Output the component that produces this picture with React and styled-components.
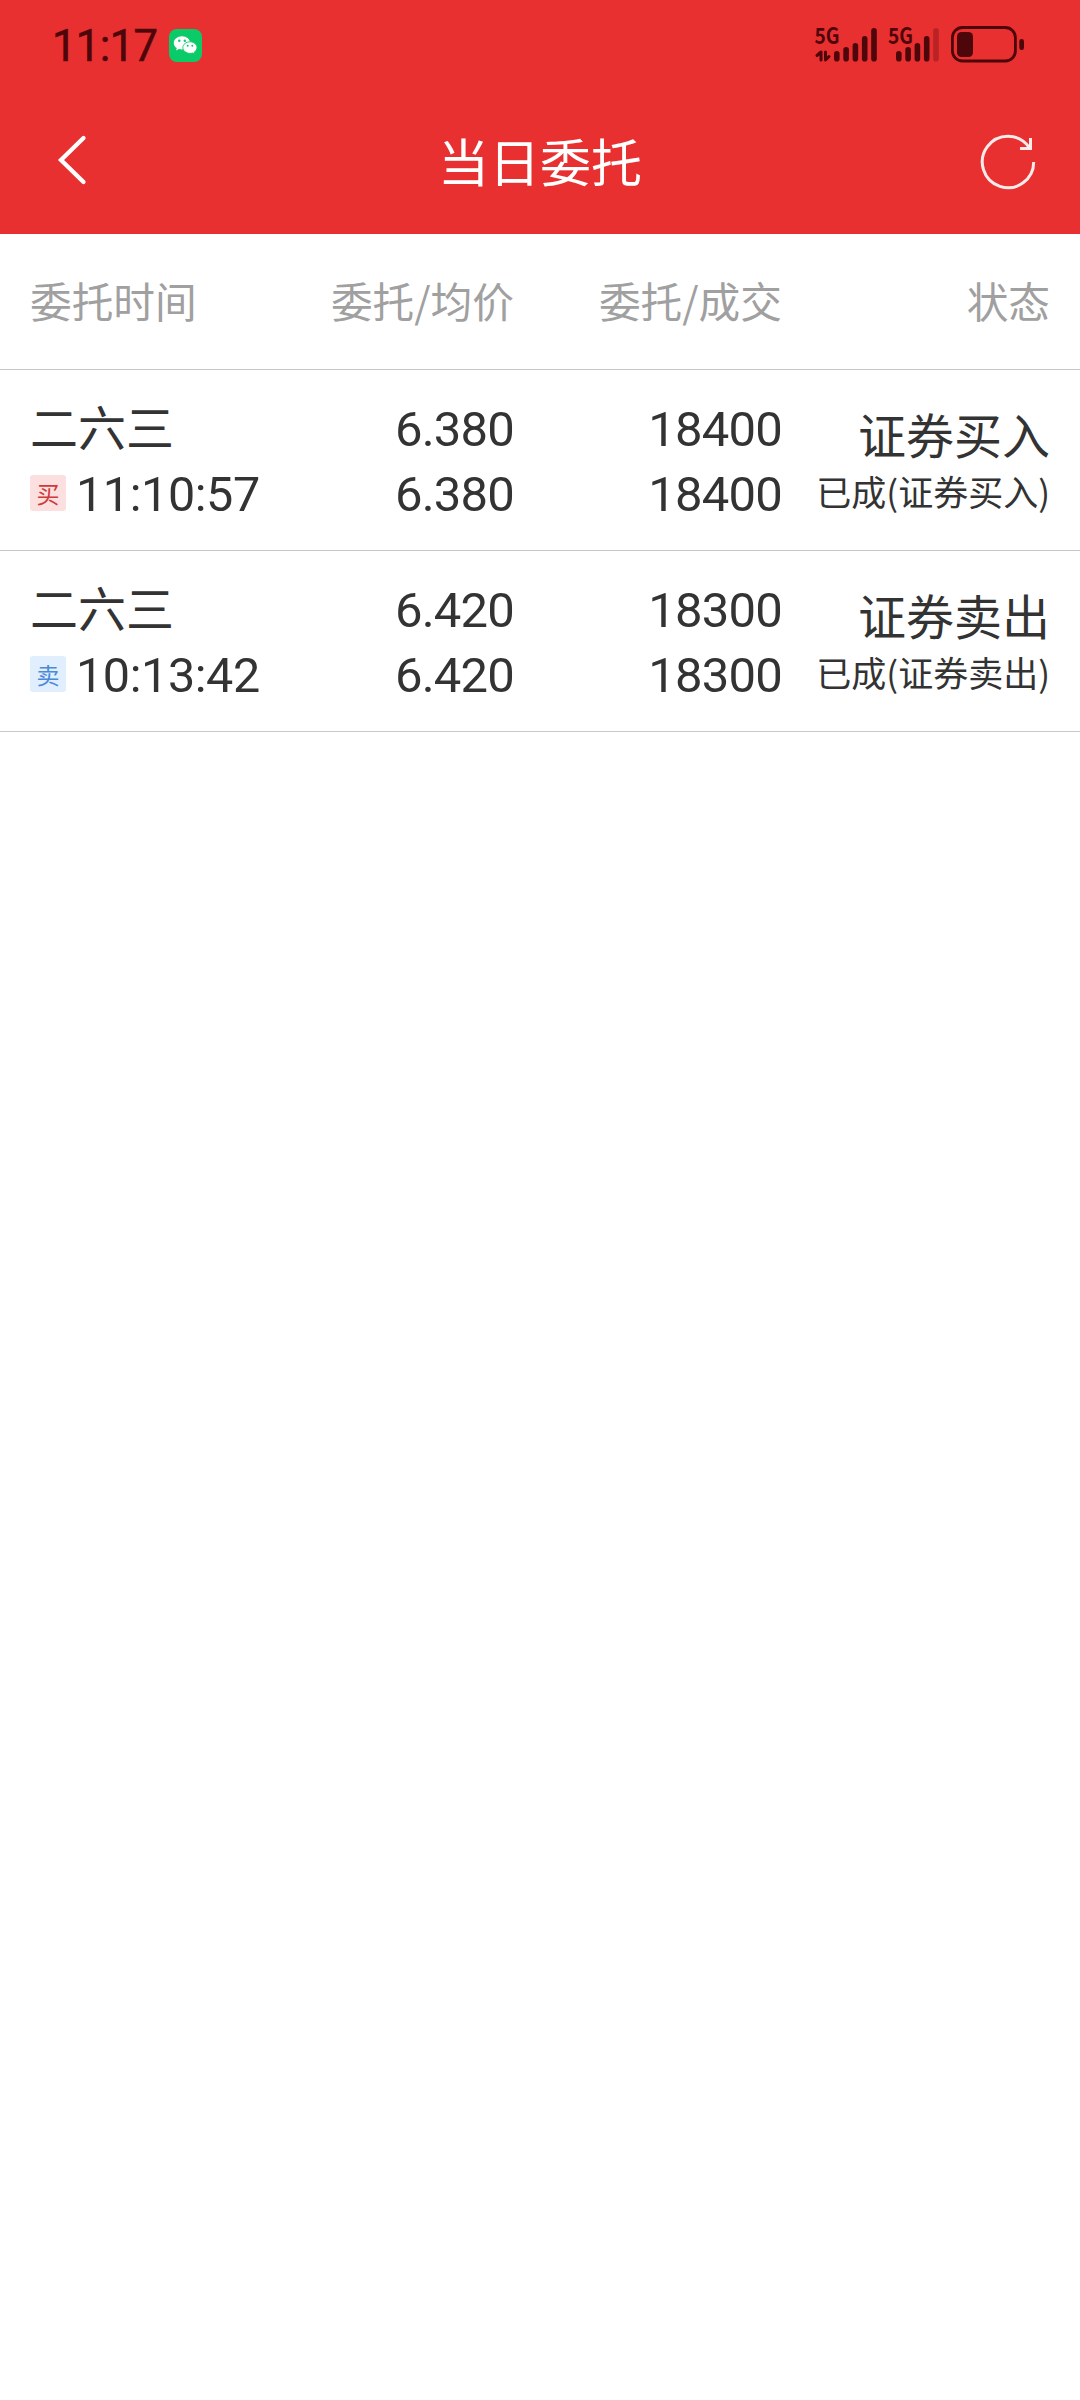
import React from "react";
import styled, { createGlobalStyle } from "styled-components";

const GlobalStyle = createGlobalStyle`
  body {
    margin: 0;
    background-color: #fff;
    font-family: "Noto Sans CJK SC", sans-serif;
  }
`;

const Screen = styled.div`
  width: 1080px;
  min-height: 2400px;
  background-color: #fff;
  color: #333;
`;

const TopContainer = styled.header`
  height: 234px;
  background-color: #e83030;
`;

const StatusBar = styled.div`
  height: 90px;
  box-sizing: border-box;
  padding: 0 52px;
  display: flex;
  align-items: center;
  color: #4d060a;
`;

const Clock = styled.span`
  width: 117px;
  font-family: Roboto, sans-serif;
  font-size: 43.5px;
  font-weight: 400;
  line-height: 88px;
  padding-top: 4px;
  letter-spacing: -0.6px;
  -webkit-text-stroke: 0.6px currentColor;
`;

const StatusIcons = styled.svg`
  margin-left: auto;
`;

const NavBar = styled.div`
  height: 144px;
  display: grid;
  grid-template-columns: 140px 1fr 140px;
  align-items: center;
`;

const NavButton = styled.button`
  height: 144px;
  padding: 0;
  border: 0;
  background: none;
`;

const Title = styled.h1`
  margin: 0;
  font-size: 51px;
  font-weight: 400;
  line-height: 141px;
  height: 144px;
  text-align: center;
  color: #fff;
`;

const Row = styled.div`
  display: grid;
  grid-template-columns: 239px 245px 268px 268px;
  padding: 0 30px;
  border-bottom: 1px solid #c8c8c8;
`;

const HeadRow = styled(Row)`
  height: 135px;
  font-size: 41.7px;
  line-height: 133px;
  color: #a0a0a0;
`;

const OrderRow = styled(Row)`
  height: 180px;
`;

const Cell = styled.div`
  text-align: ${(props) => props.$align || "right"};
  white-space: nowrap;
`;

const NameCell = styled(Cell)`
  padding-top: 24px;
  font-size: 48px;
`;

const StockName = styled.div`
  line-height: 62px;
`;

const TimeLine = styled.div`
  display: flex;
  align-items: center;
  margin-top: 6px;
  font-family: Roboto, sans-serif;
  font-size: 48.5px;
  line-height: 65px;
  letter-spacing: -0.4px;
`;

const Badge = styled.span`
  width: 36px;
  height: 36px;
  margin: 0 10px 4px 0;
  border-radius: 3px;
  font-family: "Noto Sans CJK SC", sans-serif;
  font-size: 23px;
  line-height: 36px;
  letter-spacing: 0;
  text-align: center;
  color: ${(props) => (props.$side === "买" ? "#cf3a3a" : "#4a8ad8")};
  background-color: ${(props) => (props.$side === "买" ? "#fcdfdf" : "#e1eefd")};
`;

const NumberCell = styled(Cell)`
  padding-top: 27px;
  font-family: Roboto, sans-serif;
  font-size: 49px;
  line-height: 65px;
  letter-spacing: -0.8px;
`;

const StatusCell = styled(Cell)`
  padding-top: 31px;
`;

const StatusName = styled.div`
  font-size: 48px;
  line-height: 64px;
`;

const StatusDetail = styled.div`
  font-size: 35px;
  line-height: 52px;
`;

const orders = [
  { name: "二六三", side: "买", time: "11:10:57", price: "6.380", amount: "18400", type: "证券买入" },
  { name: "二六三", side: "卖", time: "10:13:42", price: "6.420", amount: "18300", type: "证券卖出" },
];

const barTops = [51, 47, 43, 36, 28];

function SignalBars({ x, weak }) {
  return barTops.map((top, i) => (
    <rect
      key={top}
      x={x + i * 9.3}
      y={top}
      width="5.6"
      height={61.5 - top}
      rx="2.8"
      opacity={weak && i === 4 ? 0.3 : 1}
    />
  ));
}

function WechatIcon() {
  return (
    <svg width="33" height="33" viewBox="0 0 33 33">
      <rect width="33" height="33" rx="8" fill="#0acb68" />
      <path
        d="M13 7.2c-4.6 0-8.2 3-8.2 6.7 0 2.1 1.2 4 3 5.2l-.7 2.3 2.8-1.4c1 .3 2 .4 3.1.4 4.6 0 8.2-2.9 8.2-6.5S17.6 7.2 13 7.2z"
        fill="#fff"
      />
      <path
        d="M21 12.8c-4 0-7.1 2.6-7.1 5.8s3.1 5.8 7.1 5.8c.9 0 1.7-.1 2.5-.4l2.3 1.2-.6-2c1.7-1.1 2.8-2.7 2.8-4.6 0-3.2-3.1-5.8-7-5.8z"
        fill="#fff"
        stroke="#0acb68"
        strokeWidth="0.9"
      />
      <g fill="#0acb68">
        <circle cx="10.3" cy="11.7" r="1.2" />
        <circle cx="15.8" cy="11.7" r="1.2" />
        <circle cx="18.7" cy="16.8" r="1" />
        <circle cx="23.3" cy="16.8" r="1" />
      </g>
    </svg>
  );
}

function SystemIcons() {
  return (
    <StatusIcons width="216" height="90" viewBox="812 0 216 90" fill="#4d060a">
      <g fontSize="22.5" fontWeight="700">
        <text x="814.5" y="44" textLength="25" lengthAdjust="spacingAndGlyphs">5G</text>
        <text x="888" y="44" textLength="25" lengthAdjust="spacingAndGlyphs">5G</text>
      </g>
      <path
        d="M817 55.5l4-3.5V60M825.5 52v8l3.5-3.5"
        fill="none"
        stroke="#4d060a"
        strokeWidth="3"
        strokeLinejoin="round"
        strokeLinecap="round"
      />
      <SignalBars x={834} />
      <SignalBars x={896} weak />
      <rect x="952.4" y="27.5" width="63" height="33.5" rx="10" fill="none" stroke="#4d060a" strokeWidth="2.8" />
      <rect x="957" y="32" width="16" height="25" rx="4.5" />
      <rect x="1019.3" y="39" width="4.7" height="11" rx="2.3" />
    </StatusIcons>
  );
}

function BackIcon() {
  return (
    <svg width="140" height="144" viewBox="0 90 140 144">
      <path d="M83.5 138L61 160L83.5 182" fill="none" stroke="#fff" strokeWidth="4.3" strokeLinecap="round" />
    </svg>
  );
}

function RefreshIcon() {
  return (
    <svg width="140" height="144" viewBox="940 90 140 144" fill="none" stroke="#fff" strokeOpacity="0.9" strokeWidth="3">
      <path d="M1033.7 162A25.7 25.7 0 1 1 1029 147.2" />
      <path d="M1030.5 138V148.5H1020" />
    </svg>
  );
}

export default function App() {
  return (
    <Screen>
      <GlobalStyle />
      <TopContainer>
        <StatusBar>
          <Clock>11:17</Clock>
          <WechatIcon />
          <SystemIcons />
        </StatusBar>
        <NavBar>
          <NavButton aria-label="返回">
            <BackIcon />
          </NavButton>
          <Title>当日委托</Title>
          <NavButton aria-label="刷新">
            <RefreshIcon />
          </NavButton>
        </NavBar>
      </TopContainer>
      <HeadRow>
        <Cell $align="left">委托时间</Cell>
        <Cell>委托/均价</Cell>
        <Cell>委托/成交</Cell>
        <Cell>状态</Cell>
      </HeadRow>
      {orders.map((order) => (
        <OrderRow key={order.time}>
          <NameCell $align="left">
            <StockName>{order.name}</StockName>
            <TimeLine>
              <Badge $side={order.side}>{order.side}</Badge>
              {order.time}
            </TimeLine>
          </NameCell>
          <NumberCell>
            <div>{order.price}</div>
            <div>{order.price}</div>
          </NumberCell>
          <NumberCell>
            <div>{order.amount}</div>
            <div>{order.amount}</div>
          </NumberCell>
          <StatusCell>
            <StatusName>{order.type}</StatusName>
            <StatusDetail>已成({order.type})</StatusDetail>
          </StatusCell>
        </OrderRow>
      ))}
    </Screen>
  );
}
